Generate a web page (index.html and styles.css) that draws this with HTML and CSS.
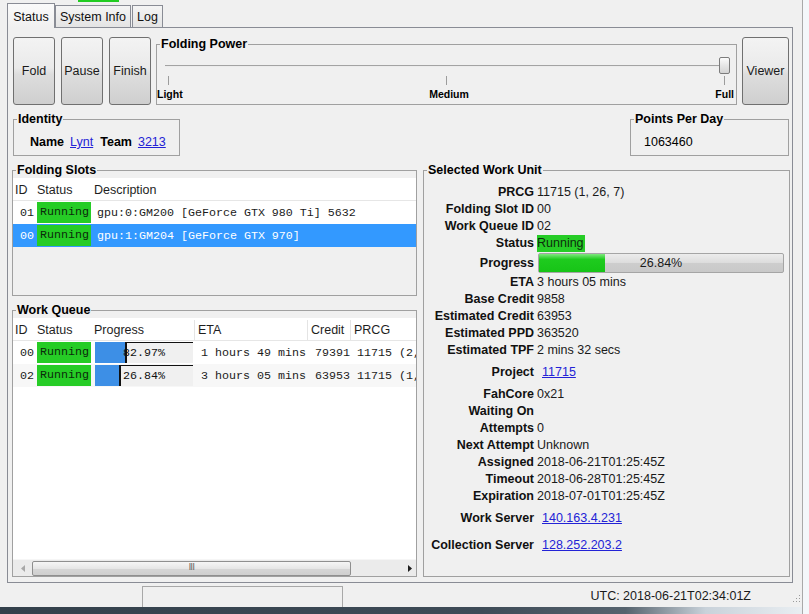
FILE: index.html
```html
<!DOCTYPE html>
<html>
<head>
<meta charset="utf-8">
<title>FAHControl</title>
<link rel="stylesheet" href="styles.css">
</head>
<body>
<div class="screen">
  <div class="main">
    <div class="topstrip"><span class="topgreen"></span></div>
    <div class="tabs">
      <div class="tab active t-status">Status</div>
      <div class="tab t-sys">System Info</div>
      <div class="tab t-log">Log</div>
    </div>
    <div class="pane">
      <div class="row1">
        <button class="btn">Fold</button>
        <button class="btn">Pause</button>
        <button class="btn">Finish</button>
        <fieldset class="group power">
          <legend>Folding Power</legend>
          <div class="slider">
            <div class="groove"></div>
            <div class="handle"></div>
          </div>
          <div class="ticks"><span></span><span></span><span></span></div>
          <div class="tlabels"><span>Light</span><span>Medium</span><span>Full</span></div>
        </fieldset>
        <button class="btn viewer">Viewer</button>
      </div>

      <div class="row2">
        <fieldset class="group identity">
          <legend>Identity</legend>
          <div class="idline"><b class="k-name">Name</b><a class="link l-lynt" href="#">Lynt</a><b class="k-team">Team</b><a class="link" href="#">3213</a></div>
        </fieldset>
        <fieldset class="group ppd">
          <legend>Points Per Day</legend>
          <div class="ppdval">1063460</div>
        </fieldset>
      </div>

      <div class="row3">
        <div class="leftcol">
          <fieldset class="group slots">
            <legend>Folding Slots</legend>
            <div class="table">
              <div class="tr th slot-cols"><span class="h">ID</span><span class="h">Status</span><span class="h">Description</span></div>
              <div class="tr slot-cols"><span class="c-id">01</span><span class="c-st"><span class="run">Running</span></span><span class="c-desc">gpu:0:GM200 [GeForce GTX 980 Ti] 5632</span></div>
              <div class="tr slot-cols sel"><span class="c-id">00</span><span class="c-st"><span class="run">Running</span></span><span class="c-desc">gpu:1:GM204 [GeForce GTX 970]</span></div>
            </div>
          </fieldset>

          <fieldset class="group queue">
            <legend>Work Queue</legend>
            <div class="table qtable">
              <div class="tr th q-cols"><span class="h">ID</span><span class="h">Status</span><span class="h hs">Progress</span><span class="h hs">ETA</span><span class="h hs">Credit</span><span class="h">PRCG</span></div>
              <div class="tr q-cols"><span class="c-id">00</span><span class="c-st"><span class="run">Running</span></span>
                <span class="c-prog"><span class="pbar"><span class="pfill-row"><span class="pfill" style="width:30px"></span><span class="prest"></span></span><span class="ptext">82.97%</span></span></span>
                <span class="c-eta">1 hours 49 mins</span><span class="c-cr">79391</span><span class="c-prcg">11715 (2,</span></div>
              <div class="tr q-cols alt"><span class="c-id">02</span><span class="c-st"><span class="run">Running</span></span>
                <span class="c-prog"><span class="pbar"><span class="pfill-row"><span class="pfill" style="width:24px"></span><span class="prest"></span></span><span class="ptext">26.84%</span></span></span>
                <span class="c-eta">3 hours 05 mins</span><span class="c-cr">63953</span><span class="c-prcg">11715 (1,</span></div>
              <div class="qspace"></div>
              <div class="hscroll">
                <span class="arr arr-l"><svg width="4" height="7" viewBox="0 0 4 7"><path d="M4 0 L0 3.5 L4 7 Z" fill="#a8a8a8"/></svg></span>
                <span class="thumb"><span class="grip">III</span></span>
                <span class="track"></span>
                <span class="arr arr-r"><svg width="4" height="7" viewBox="0 0 4 7"><path d="M0 0 L4 3.5 L0 7 Z" fill="#1e1e1e"/></svg></span>
              </div>
            </div>
          </fieldset>
        </div>

        <fieldset class="group wu">
          <legend>Selected Work Unit</legend>
          <div class="wu-grid">
            <b class="lab">PRCG</b><span class="val">11715 (1, 26, 7)</span>
            <b class="lab">Folding Slot ID</b><span class="val">00</span>
            <b class="lab">Work Queue ID</b><span class="val">02</span>
            <b class="lab">Status</b><span class="val"><span class="wu-run">Running</span></span>
            <b class="lab r-prog">Progress</b><span class="val"><span class="wbar"><span class="wfill"></span><span class="wtext">26.84%</span></span></span>
            <b class="lab">ETA</b><span class="val">3 hours 05 mins</span>
            <b class="lab">Base Credit</b><span class="val">9858</span>
            <b class="lab">Estimated Credit</b><span class="val">63953</span>
            <b class="lab">Estimated PPD</b><span class="val">363520</span>
            <b class="lab">Estimated TPF</b><span class="val">2 mins 32 secs</span>
            <b class="lab r-link">Project</b><span class="val"><a class="link wl" href="#">11715</a></span>
            <b class="lab">FahCore</b><span class="val">0x21</span>
            <b class="lab">Waiting On</b><span class="val"></span>
            <b class="lab">Attempts</b><span class="val">0</span>
            <b class="lab">Next Attempt</b><span class="val">Unknown</span>
            <b class="lab">Assigned</b><span class="val">2018-06-21T01:25:45Z</span>
            <b class="lab">Timeout</b><span class="val">2018-06-28T01:25:45Z</span>
            <b class="lab">Expiration</b><span class="val">2018-07-01T01:25:45Z</span>
            <b class="lab r-link">Work Server</b><span class="val"><a class="link wl" href="#">140.163.4.231</a></span>
            <b class="lab r-link">Collection Server</b><span class="val"><a class="link wl" href="#">128.252.203.2</a></span>
          </div>
        </fieldset>
      </div>
    </div>

    <div class="statusbar">
      <span class="sb-panel"></span>
      <span class="sb-time">UTC: 2018-06-21T02:34:01Z</span>
      <svg class="sb-grip" width="8" height="10" viewBox="0 0 8 10">
        <rect x="6" y="2" width="1" height="1" fill="#9a9a9a"/>
        <rect x="6" y="5" width="1" height="1" fill="#9a9a9a"/>
        <rect x="3" y="5" width="1" height="1" fill="#9a9a9a"/>
        <rect x="6" y="8" width="1" height="1" fill="#9a9a9a"/>
        <rect x="3" y="8" width="1" height="1" fill="#9a9a9a"/>
        <rect x="0" y="8" width="1" height="1" fill="#9a9a9a"/>
      </svg>
    </div>
    <div class="taskbar"></div>
  </div>
  <div class="outside"></div>
</div>
</body>
</html>
```

FILE: styles.css
```css
* { box-sizing: border-box; }
html, body { margin: 0; padding: 0; }
body {
  width: 809px;
  height: 614px;
  overflow: hidden;
  background: #f0f0f0;
  font-family: "Liberation Sans", Arial, sans-serif;
  font-size: 12.5px;
  color: #000;
}
.screen { display: flex; height: 614px; }
.main {
  width: 803px;
  border-right: 1px solid #a9a9a9;
  display: flex;
  flex-direction: column;
  background: #f0f0f0;
}
.outside { flex: 1; background: #f4f7fa; }

.topstrip { height: 3px; display: flex; }
.topgreen { width: 41px; height: 2px; margin-left: 78px; background: #22cc22; }

/* tabs */
.tabs {
  height: 25px;
  margin-left: 7px;
  width: 786px;
  border-bottom: 1px solid #898c95;
  display: flex;
  align-items: flex-end;
}
.tab {
  height: 22px;
  border: 1px solid #898c95;
  border-bottom: none;
  background: linear-gradient(#f4f4f4, #e4e4e4);
  line-height: 15px;
  padding-top: 4px;
  text-align: center;
  color: #111;
}
.tab.active {
  height: 25px;
  margin-bottom: -1px;
  padding-top: 6px;
  background: linear-gradient(#fafafa, #f0f0f0);
}
.t-status { width: 48px; }
.t-sys { width: 76px; }
.t-log { width: 31px; margin-left: 1px; }

/* pane */
.pane {
  margin-left: 7px;
  width: 786px;
  height: 555px;
  border: 1px solid #898c95;
  border-top: none;
  padding: 9px 2px 5px 4px;
  display: flex;
  flex-direction: column;
  gap: 7px;
}

.row1 { display: flex; height: 68px; margin: 0 1px; gap: 6px; }
.btn {
  width: 42px;
  height: 68px;
  border: 1px solid #707070;
  border-radius: 3px;
  background: linear-gradient(#f3f3f3, #eaeaea 45%, #dddddd 55%, #cfcfcf);
  font: inherit;
  color: #1a1a1a;
  padding: 0;
}
.viewer { width: 47px; }

.group {
  margin: 0;
  padding: 0;
  border: 1px solid #a0a0a0;
  min-width: 0;
}
.group legend {
  font-weight: bold;
  line-height: 15px;
  padding: 0 1px;
  margin-left: 3px;
}

.power { flex: 1; margin: 0 -1px; }
.slider {
  display: grid;
  margin: 5px 6px 0 8px;
  height: 17px;
  align-items: center;
}
.slider > * { grid-area: 1 / 1; }
.groove {
  height: 2px;
  border-top: 1px solid #a3a3a3;
  border-bottom: 1px solid #ececec;
  margin-right: 2px;
}
.handle {
  justify-self: end;
  width: 11px;
  height: 17px;
  border: 1px solid #7c7c7c;
  border-radius: 2px;
  background: linear-gradient(#fbfbfb, #e6e6e6 50%, #d3d3d3);
}
.ticks {
  display: flex;
  justify-content: space-between;
  margin: 2px 11px 0 11px;
  height: 9px;
}
.ticks span { width: 1px; height: 9px; background: #9c9c9c; }
.tlabels {
  display: flex;
  justify-content: space-between;
  margin: 3px 2px 0 0;
  font-size: 10.5px;
  font-weight: bold;
  line-height: 12px;
}

/* row 2 */
.row2 { display: flex; justify-content: space-between; height: 44px; margin: 0 1px; }
.identity { width: 167px; }
.ppd { width: 159px; }
.idline { display: flex; margin-top: 8px; padding-left: 16px; line-height: 15px; }
.k-name { margin-right: 6px; }
.l-lynt { margin-right: 7px; }
.k-team { margin-right: 6px; }
.link { color: #2323d6; text-decoration: underline; }
.ppdval { margin-top: 8px; padding-left: 13px; line-height: 15px; }

/* row 3 */
.row3 {
  display: grid;
  grid-template-columns: 405px 367px;
  column-gap: 6px;
  height: 414px;
}
.leftcol { display: flex; flex-direction: column; gap: 7px; }
.slots { height: 133px; display: flex; flex-direction: column; }
.queue { flex: 1; display: flex; flex-direction: column; }
.table { flex: 1; background: #fff; display: flex; flex-direction: column; overflow: hidden; }

.tr { display: grid; height: 23px; align-items: center; white-space: nowrap; }
.tr.th { height: 23px; border-bottom: 1px solid #e6e6e6; align-items: end; }
.slot-cols { grid-template-columns: 22px 57px 1fr; }
.q-cols { grid-template-columns: 22px 57px 103px 113px 43px 1fr; }
.h { padding-left: 2px; color: #1e1e1e; line-height: 20px; height: 20px; }
.q-cols .h:nth-child(4) { padding-left: 3px; }
.q-cols .h:nth-child(5) { padding-left: 3px; }
.q-cols .h:nth-child(6) { padding-left: 3px; }
.hs { border-right: 1px solid #e4e4e4; }

.tr > span:not(.h) { font-family: "Liberation Mono", "Courier New", monospace; font-size: 11.67px; }
.c-id { padding-left: 7px; color: #1b1b1b; }
.c-st { height: 23px; display: flex; }
.run {
  margin: 1px 1px 1px 2px;
  flex: 1;
  background: #26cc26;
  color: #0b2a0b;
  padding-left: 3px;
  line-height: 21px;
}
.c-desc { padding-left: 5px; color: #1b1b1b; }
.sel { background: #3399ff; }
.sel .c-id, .sel .c-desc { color: #fff; }
.alt { background: #f7f7f7; }

.c-prog { height: 23px; display: flex; padding: 1px 2px 1px 3px; }
.pbar { flex: 1; display: grid; background: #f0f0f0; }
.pbar > * { grid-area: 1 / 1; }
.pfill-row { display: flex; }
.pfill { background: #3d8fe6; }
.prest { flex: 1; border-top: 1px solid #111; border-left: 2px solid #111; }
.ptext { align-self: center; text-align: center; color: #111; line-height: 14px; }
.c-eta { padding-left: 6px; color: #1b1b1b; }
.c-cr { padding-left: 7px; color: #1b1b1b; }
.c-prcg { padding-left: 6px; color: #1b1b1b; overflow: hidden; }

.qspace { flex: 1; }
.hscroll {
  height: 17px;
  display: flex;
  align-items: center;
  background: #ebebeb;
  border-top: 1px solid #f6f6f6;
}
.arr { width: 19px; height: 15px; display: flex; align-items: center; justify-content: center; }
.arr-r { width: 13px; }
.thumb {
  width: 319px;
  height: 15px;
  border: 1px solid #8f8f8f;
  border-radius: 2px;
  background: linear-gradient(#f6f6f6, #e6e6e6 50%, #d6d6d6 51%, #cfcfcf);
  display: flex;
  align-items: center;
  justify-content: center;
}
.grip { font-size: 8px; line-height: 8px; color: #555; letter-spacing: -0.5px; font-family: "DejaVu Sans", sans-serif; }
.track { flex: 1; }

/* selected work unit */
.wu { display: flex; flex-direction: column; }
.wu-grid {
  display: grid;
  grid-template-columns: 110px 1fr;
  column-gap: 3px;
  padding-top: 6px;
}
.lab {
  height: 17px;
  display: flex;
  align-items: center;
  justify-content: flex-end;
  white-space: nowrap;
  color: #111;
  line-height: 15px;
}
.val { display: flex; align-items: center; white-space: nowrap; color: #1a1a1a; line-height: 15px; }
.r-prog { height: 22px; }
.r-link { height: 27px; }
.wl { margin-left: 5px; }
.wu-run { background: #26cc26; color: #0d2e0d; line-height: 17px; height: 17px; padding: 0 1px 0 0; }
.wbar {
  margin-left: 1px;
  width: 246px;
  height: 20px;
  border: 1px solid #a5a5a5;
  border-radius: 2px;
  background: linear-gradient(#ececec, #dcdcdc 50%, #cdcdcd 51%, #c9c9c9);
  display: grid;
}
.wbar > * { grid-area: 1 / 1; }
.wfill {
  width: 66px;
  background: linear-gradient(#7fe87f, #1ecb1e 30%, #17c417);
}
.wtext { align-self: center; text-align: center; line-height: 15px; color: #1a1a1a; }

/* status bar */
.statusbar { height: 24px; display: flex; align-items: flex-start; }
.sb-panel {
  margin-left: 142px;
  margin-top: 3px;
  width: 201px;
  height: 21px;
  border: 1px solid #a8a8a8;
  border-bottom: none;
}
.sb-time { margin-left: auto; margin-top: 6px; line-height: 15px; margin-right: 42px; color: #1a1a1a; }
.sb-grip { margin-top: 10px; margin-right: 1px; }
.taskbar {
  height: 7px;
  background: linear-gradient(90deg, #33404b 0%, #3e4b57 60%, #56636e 78%, #c9d2da 88%, #e9eef2 100%);
}
```
